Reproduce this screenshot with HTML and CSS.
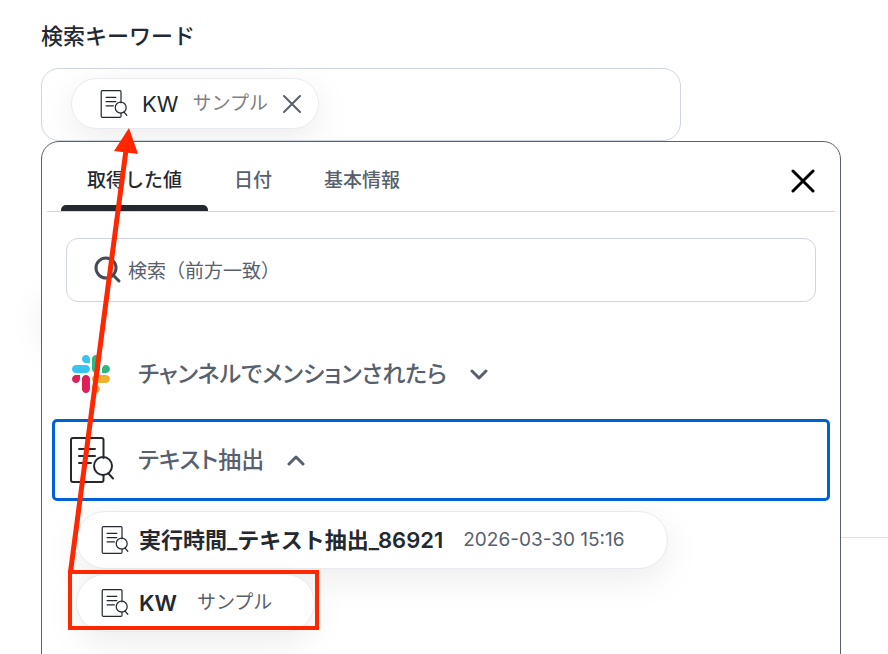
FILE: index.html
```html
<!DOCTYPE html>
<html lang="ja">
<head>
<meta charset="utf-8">
<meta name="viewport" content="width=device-width, initial-scale=1">
<title>検索キーワード</title>
<link rel="stylesheet" href="styles.css">
</head>
<body>
<svg class="sprite" aria-hidden="true">
  <symbol id="doc-search" viewBox="0 0 46 48">
    <g fill="none" stroke="currentColor" stroke-width="2" stroke-linecap="round" stroke-linejoin="round">
      <path d="M34.500 22V4q0-2-2-2H4Q2 2 2 4v40q0 2 2 2h28.500q2 0 2-2v-5"/>
      <path d="M10 13h16M10 20h16M10 27h12"/>
      <circle cx="34" cy="30" r="9"/>
      <path d="M39.500 37.500l4.500 5"/>
    </g>
  </symbol>
</svg>
<main class="page">
  <h1 class="label">検索キーワード</h1>
  <div class="picker">
    <div class="field">
      <div class="chip chip-field">
        <svg class="doc"><use href="#doc-search"/></svg>
        <span class="chip-name">KW</span>
        <span class="chip-note">サンプル</span>
        <button class="remove" type="button" aria-label="削除">
          <svg viewBox="0 0 20 20"><path d="M2 2l16 16M18 2L2 18"/></svg>
        </button>
      </div>
    </div>
    <section class="popover">
      <div class="tabs">
        <button class="tab tab-active" type="button">取得した値</button>
        <button class="tab" type="button">日付</button>
        <button class="tab" type="button">基本情報</button>
        <button class="close" type="button" aria-label="閉じる">
          <svg viewBox="0 0 24 24"><path d="M2 2l20 20M22 2L2 22"/></svg>
        </button>
      </div>
      <label class="search">
        <svg class="search-icon" viewBox="0 0 28 28"><circle cx="12" cy="12" r="10"/><path d="M19 19l6 6"/></svg>
        <input type="text" placeholder="検索（前方一致）" aria-label="検索（前方一致）">
      </label>
      <div class="groups">
        <button class="group" type="button">
          <span class="group-icon">
            <svg class="slack" viewBox="0 0 123 123">
              <path fill="#e01e5a" d="M25.800 77.600c0 7.100-5.800 12.900-12.900 12.900S0 84.700 0 77.600s5.800-12.900 12.900-12.900h12.900zM32.300 77.600c0-7.100 5.800-12.900 12.900-12.900s12.900 5.800 12.900 12.900v32.300c0 7.100-5.800 12.900-12.900 12.900s-12.900-5.800-12.900-12.900z"/>
              <path fill="#36c5f0" d="M45.200 25.800c-7.100 0-12.900-5.800-12.900-12.900S38.100 0 45.200 0s12.900 5.800 12.900 12.900v12.900zM45.200 32.300c7.100 0 12.900 5.800 12.900 12.900s-5.800 12.900-12.900 12.900H12.900C5.800 58.100 0 52.300 0 45.200s5.800-12.900 12.900-12.900z"/>
              <path fill="#2eb67d" d="M97 45.200c0-7.100 5.800-12.900 12.900-12.900s12.900 5.800 12.900 12.900-5.800 12.900-12.900 12.900H97zM90.500 45.200c0 7.100-5.800 12.900-12.900 12.900s-12.900-5.800-12.900-12.900V12.900C64.700 5.800 70.500 0 77.600 0s12.900 5.800 12.900 12.900z"/>
              <path fill="#ecb22e" d="M77.600 97c7.100 0 12.900 5.800 12.900 12.900s-5.800 12.900-12.900 12.900-12.900-5.800-12.900-12.900V97zM77.600 90.500c-7.100 0-12.900-5.800-12.900-12.900s5.800-12.900 12.900-12.900h32.300c7.100 0 12.900 5.800 12.900 12.900s-5.800 12.900-12.900 12.900z"/>
            </svg>
          </span>
          <span>チャンネルでメンションされたら</span>
          <svg class="chevron" viewBox="0 0 20 12"><path d="M3 3l7 7 7-7"/></svg>
        </button>
        <button class="group group-focused" type="button">
          <span class="group-icon"><svg class="doc-large"><use href="#doc-search"/></svg></span>
          <span>テキスト抽出</span>
          <svg class="chevron" viewBox="0 0 20 12"><path d="M3 10l7-7 7 7"/></svg>
        </button>
      </div>
      <div class="values">
        <button class="chip" type="button">
          <svg class="doc"><use href="#doc-search"/></svg>
          <span class="chip-title">実行時間_テキスト抽出_86921</span>
          <span class="chip-meta">2026-03-30 15:16</span>
        </button>
        <button class="chip" type="button">
          <svg class="doc"><use href="#doc-search"/></svg>
          <span class="chip-title">KW</span>
          <span class="chip-meta">サンプル</span>
        </button>
      </div>
    </section>
  </div>
  <div class="backdrop-card"></div>
  <hr class="divider">
  <svg class="annotation" width="330" height="640" viewBox="0 0 330 640" aria-hidden="true">
    <path d="M70.500 572L126 150" stroke-width="5"/>
    <path class="arrow-head" d="M129 128L114 151L138 154z"/>
    <rect x="70" y="572" width="247" height="56" stroke-width="4"/>
  </svg>
</main>
</body>
</html>
```
FILE: styles.css
```css
* { box-sizing: border-box; }

body {
  margin: 0;
  background: #fff;
  color: #23292f;
  font-family: Inter, "Noto Sans CJK JP", sans-serif;
  font-size: 19px;
  line-height: 28px;
}

button, input { font: inherit; color: inherit; }

button {
  margin: 0;
  padding: 0;
  border: 0;
  background: none;
}

svg { flex: none; }

.sprite { position: absolute; width: 0; height: 0; }

.page {
  position: relative;
  height: 100vh;
  padding: 20px 47px 0 41px;
  overflow: hidden;
}

.label {
  margin: 0 0 16px;
  font-size: 22px;
  font-weight: 500;
  line-height: 32px;
}

.picker { position: relative; max-width: 800px; }

.field {
  display: flex;
  align-items: center;
  max-width: 640px;
  height: 73px;
  padding: 0 29px 2px;
  border: 1px solid #cfd6df;
  border-radius: 18px;
  overflow: hidden;
}

.chip {
  display: flex;
  align-items: center;
  height: 58px;
  padding: 0 42px 0 24px;
  border: 1px solid #e8eaf0;
  border-radius: 29px;
  background: #fff;
  box-shadow: 0 10px 36px rgba(0, 0, 0, 0.08);
  white-space: nowrap;
}

.chip-field { height: 51px; padding: 0 16px 0 28px; }

.doc { width: 28px; height: 30px; color: #23292f; }

.chip-name { margin-left: 14px; font-size: 22px; }

.chip-note { margin-left: 14px; color: #808080; }

.remove { display: flex; margin-left: 14px; }

.remove svg {
  width: 20px;
  height: 20px;
  fill: none;
  stroke: #57606c;
  stroke-width: 2;
  stroke-linecap: round;
}

.popover {
  position: absolute;
  z-index: 1;
  top: 100%;
  left: 0;
  width: 100%;
  padding: 0 5px 120px;
  border: 1px solid #57606c;
  border-radius: 18px;
  background: #fff;
}

.tabs {
  display: flex;
  height: 70px;
  padding: 0 20px 0 14px;
  border-bottom: 1px solid #cfd6df;
}

.tab {
  height: 69px;
  padding: 14px 26px 0;
  border-bottom: 6px solid transparent;
  color: #57606c;
  font-weight: 500;
}

.tab-active {
  position: relative;
  color: #23292f;
}

.tab-active::after {
  content: "";
  position: absolute;
  right: 0;
  bottom: -6px;
  left: 0;
  height: 6px;
  border-radius: 5px 5px 0 0;
  background: #23292f;
}

.close { display: flex; align-items: center; margin-left: auto; padding-top: 8px; }

.close svg {
  width: 24px;
  height: 24px;
  fill: none;
  stroke: #000;
  stroke-width: 3;
  stroke-linecap: round;
}

.search {
  display: flex;
  align-items: center;
  gap: 6px;
  height: 64px;
  margin: 26px 19px 31px;
  padding: 0 27px;
  border: 1px solid #cfd6df;
  border-radius: 12px;
}

.search-icon {
  width: 28px;
  height: 28px;
  fill: none;
  stroke: #454c58;
  stroke-width: 3;
  stroke-linecap: round;
}

.search input {
  flex: 1;
  min-width: 0;
  padding: 4px 0 0;
  border: 0;
  outline: 0;
  background: none;
}

.search input::placeholder { color: #57606c; opacity: 1; }

.groups {
  display: grid;
  gap: 4px;
  margin: 0 5px;
}

.group {
  display: flex;
  align-items: center;
  height: 82px;
  padding: 0 14px;
  border: 3px solid transparent;
  border-radius: 5px;
  color: #57606c;
  font-size: 23px;
  font-weight: 500;
  font-feature-settings: "palt";
}

.group-focused { border-color: #0061d5; }

.group-icon { display: flex; width: 46px; margin-right: 23px; }

.slack { width: 38px; height: 38px; margin-left: 3px; }

.doc-large { width: 46px; height: 48px; color: #23292f; }

.chevron {
  width: 20px;
  height: 12px;
  margin-left: 22px;
  fill: none;
  stroke: #57606c;
  stroke-width: 3;
  stroke-linecap: round;
  stroke-linejoin: round;
}

.values {
  display: flex;
  flex-direction: column;
  align-items: flex-start;
  gap: 5px;
  margin: 10px 29px 0;
}

.chip-title {
  margin-left: 10px;
  font-size: 22px;
  font-weight: 600;
}

.chip-meta { margin-left: 20px; color: #57606c; }

.backdrop-card {
  max-width: 500px;
  height: 58px;
  margin-top: 142px;
  border-radius: 29px;
  box-shadow: 0 10px 36px rgba(0, 0, 0, 0.08);
}

.divider {
  height: 1px;
  margin: 196px -47px 0 0;
  border: 0;
  background: #dfe1e4;
}

.annotation {
  position: absolute;
  z-index: 2;
  top: 0;
  left: 0;
  fill: none;
  stroke: #ff2600;
  pointer-events: none;
}

.annotation .arrow-head { fill: #ff2600; stroke: none; }
```
